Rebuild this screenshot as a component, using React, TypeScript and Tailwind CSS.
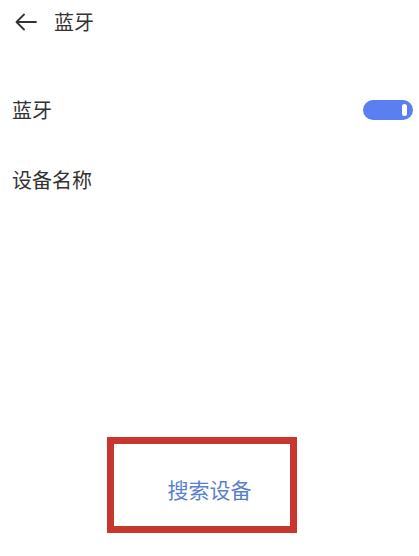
import React from "react";

const BackArrow = () => (
  <svg width="24" height="20" viewBox="0 0 24 20" fill="none">
    <path
      d="M22 10H2.5M10 2.5L2.5 10L10 17.5"
      stroke="#333"
      strokeWidth="1.8"
      strokeLinecap="round"
      strokeLinejoin="round"
    />
  </svg>
);

const Toggle: React.FC<{ on?: boolean }> = ({ on = true }) => (
  <div
    className={`w-[50px] h-[20px] rounded-full flex items-center px-[6px] ${
      on ? "bg-[#5b7ef0] justify-end" : "bg-gray-300 justify-start"
    }`}
  >
    <div className="w-[5px] h-[12px] rounded-[3px] bg-white" />
  </div>
);

export default function App() {
  return (
    <div
      className="w-[419px] h-[556px] bg-white flex flex-col text-[#333]"
      style={{ fontFamily: '"Noto Sans CJK SC", "Noto Sans", sans-serif' }}
    >
      {/* Header */}
      <div className="h-[44px] flex items-center pl-[14px]">
        <BackArrow />
        <span className="ml-[16px] text-[20px] leading-none">蓝牙</span>
      </div>

      {/* Settings rows */}
      <div className="mt-[31px]">
        <div className="h-[70px] flex items-center justify-between pl-[12px] pr-[6px]">
          <span className="text-[20px] leading-none">蓝牙</span>
          <Toggle on />
        </div>
        <div className="h-[70px] flex items-center pl-[12px]">
          <span className="text-[20px] leading-none">设备名称</span>
        </div>
      </div>

      {/* Search button */}
      <div className="mt-auto mb-[39px] h-[56px] relative flex items-center justify-center">
        <span className="text-[21px] leading-none text-[#5a7fd0]">搜索设备</span>
        <div className="absolute top-[-24px] left-[107px] w-[190px] h-[96px] border-[7px] border-[#c9362e]" />
      </div>
    </div>
  );
}
